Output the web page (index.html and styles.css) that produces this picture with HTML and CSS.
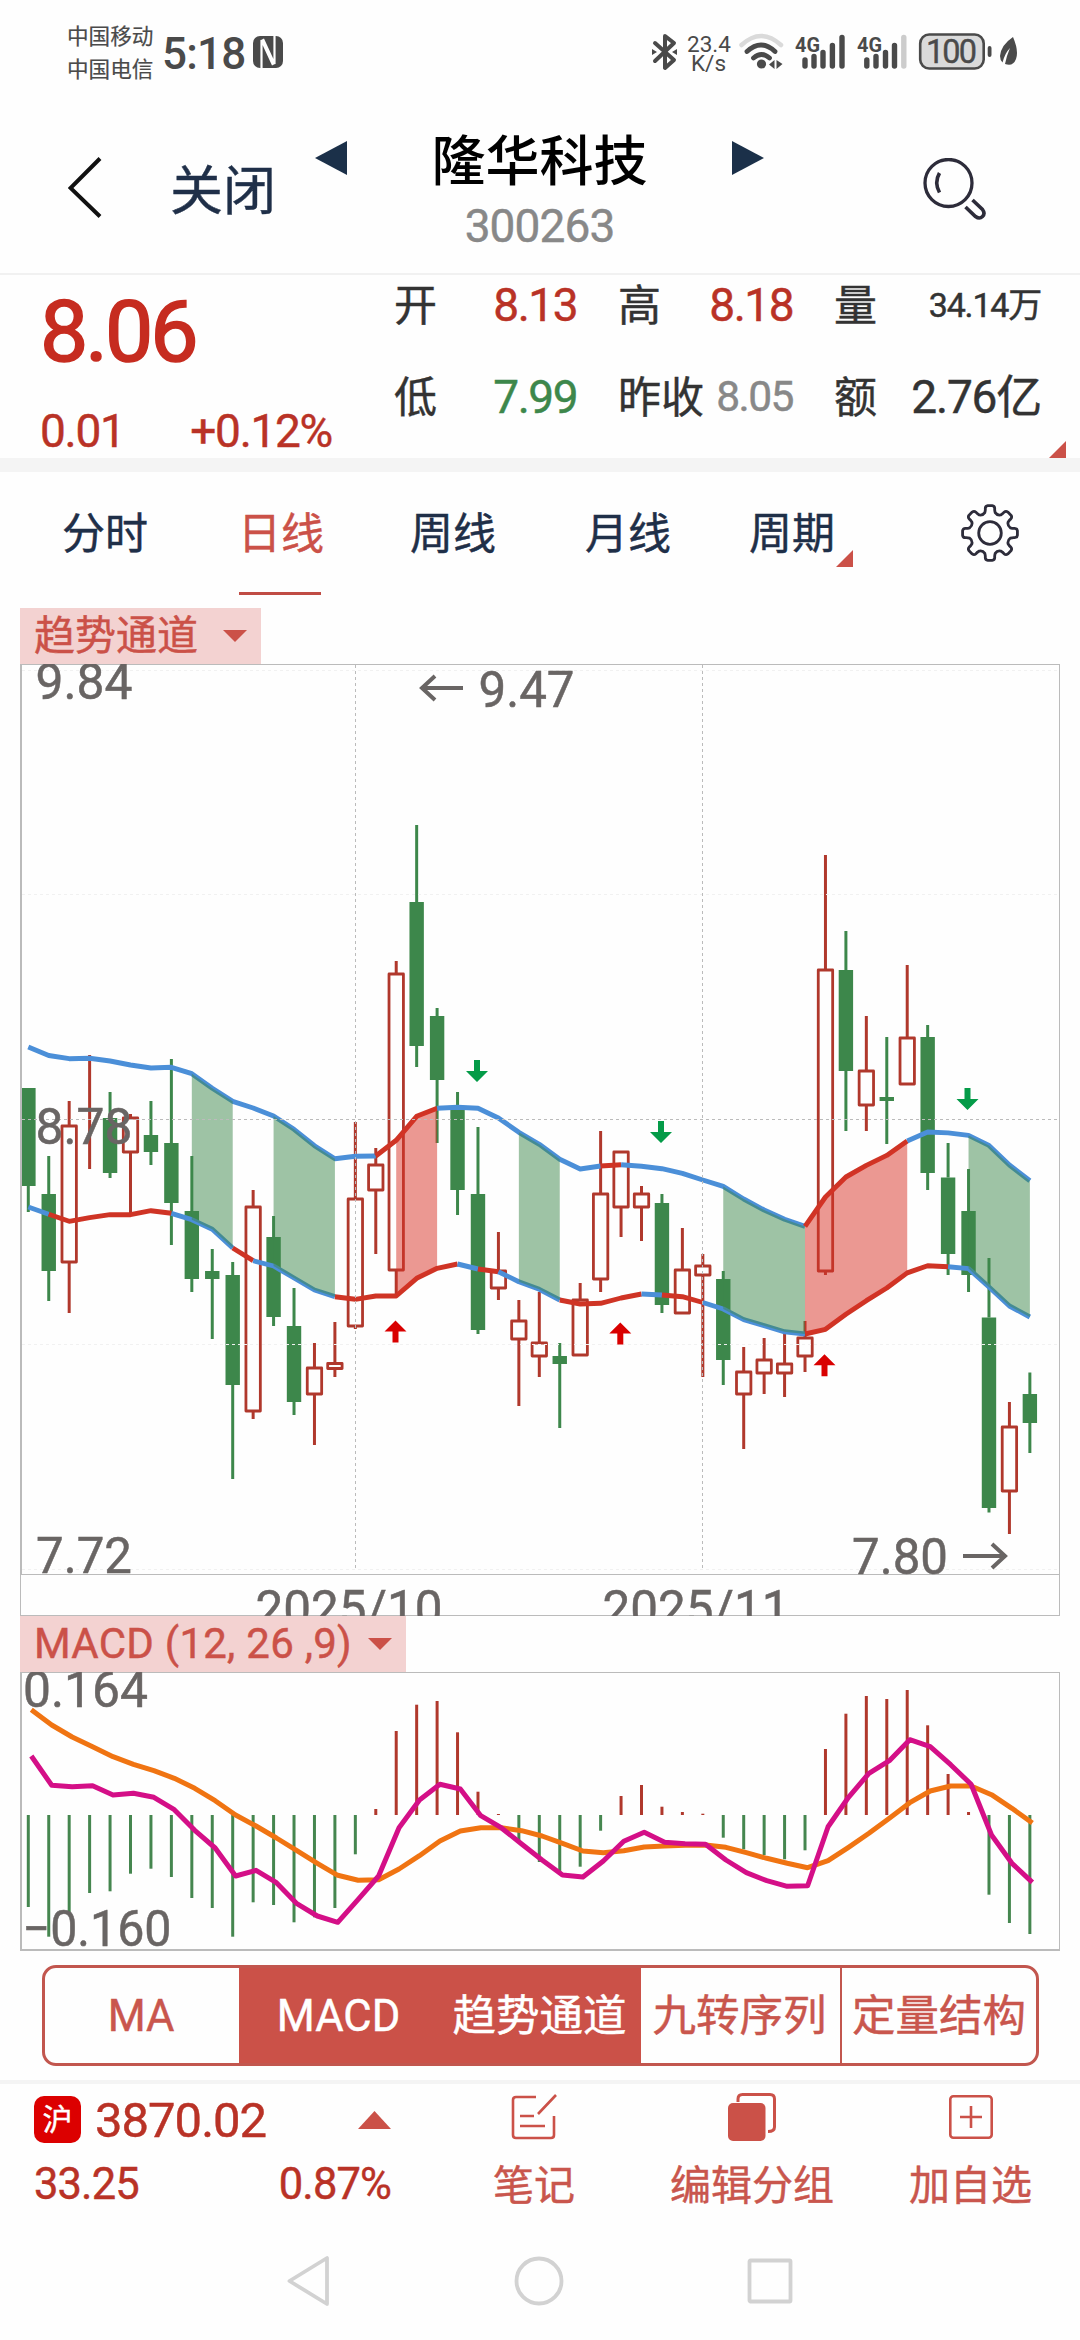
FILE: index.html
```html
<!DOCTYPE html>
<html lang="zh-CN">
<head>
<meta charset="utf-8">
<title>隆华科技 300263</title>
<link rel="stylesheet" href="styles.css">
</head>
<body>
<div class="status">
  <div class="carriers"><span>中国移动</span><span>中国电信</span></div>
  <span class="clock">5:18</span>
  <svg class="nfc" width="30" height="34" viewBox="0 0 30 34"><rect x="0" y="1" width="30" height="32" rx="7" fill="#4a4a4a"/><path d="M8.500 34V5L20 30M21.500 0v29L10 4" fill="none" stroke="#fefefe" stroke-width="2.200"/></svg>
  <div class="status-right">
    <svg width="400" height="44" viewBox="650 30 400 44" fill="none">
      <path d="M655 43l19 17-9 8V36l9 7-19 18" stroke="#4a4a4a" stroke-width="4" stroke-linejoin="round" stroke-linecap="round"/>
      <path d="M652 49l5 3-5 3zM677 49l-5 3 5 3z" fill="#4a4a4a"/>
      <g fill="#4a4a4a" class="net">
        <text x="687" y="51.500" font-size="22.500">23.4</text><text x="691" y="70.500" font-size="22.500">K/s</text>
        <text x="795" y="51.500" font-size="21" font-weight="700" textLength="25" lengthAdjust="spacingAndGlyphs">4G</text>
        <text x="857" y="51.500" font-size="21" font-weight="700" textLength="25" lengthAdjust="spacingAndGlyphs">4G</text>
      </g>
      <path d="M741.500 45q19.500-18 39.500 0" stroke="#dadada" stroke-width="4.500" stroke-linecap="round"/>
      <path d="M747 51.500q14-13 28 0M753.500 58q8-7 16 0" stroke="#4a4a4a" stroke-width="4.800" stroke-linecap="round"/>
      <circle cx="761.500" cy="64" r="4.600" fill="#4a4a4a"/>
      <path d="M774.500 60v9l-5.500-4.500zM776.500 60v9l6-5z" fill="#4a4a4a"/>
      <g stroke="#4a4a4a" stroke-width="5.400" stroke-linecap="round">
        <path d="M805 60v6M814 56.500V66M823 52.500V66M832.400 45.500V66M842 37.500V66"/>
        <path d="M866.800 60v6M876 56.500V66M885.500 52.500V66M894.500 45.500V66"/>
        <path d="M903.800 37.500V66" stroke="#ccc"/>
      </g>
      <rect x="920.200" y="34.500" width="63.500" height="34" rx="9" fill="#dadada" stroke="#4a4a4a" stroke-width="2.600"/>
      <text x="926" y="63" font-size="32.500" fill="#4a4a4a" stroke="#4a4a4a" stroke-width=".4" textLength="51" class="net">100</text>
      <path d="M989.600 48v7" stroke="#4a4a4a" stroke-width="3.800" stroke-linecap="round"/>
      <path d="M1013 37Q1001 45 1000 56q0 4 2.500 6.500Q1005 53 1010 48q-3.500 8-5 16 8 3 11-5 3-8-3-22z" fill="#4a4a4a"/>
    </svg>
  </div>
</div>

<header class="header">
  <svg class="back" width="34" height="62" viewBox="0 0 34 62"><path d="M32 1.500L2.500 31 32 59.500" fill="none" stroke="#111" stroke-width="4"/></svg>
  <span class="close">关闭</span>
  <svg class="step" width="32" height="34"><path d="M32 0v34L0 17z" fill="#1b3049"/></svg>
  <div class="title"><span class="name">隆华科技</span><span class="code">300263</span></div>
  <svg class="step" width="32" height="34"><path d="M0 0v34l32-17z" fill="#1b3049"/></svg>
  <svg class="search" width="64" height="64" viewBox="0 0 64 64" fill="none" stroke="#2d2c3a" stroke-width="3.300"><circle cx="25.500" cy="25" r="23.500"/><path d="M16.500 15q-5.500 9.500 0 19.500" stroke-width="3.600"/><path d="M42.500 49l10 9.500q4 3 7 0t0-7L49.500 42" stroke-width="3.600"/></svg>
</header>

<section class="quote">
  <div class="last"><div class="price">8.06</div><div class="change"><span>0.01</span><span>+0.12%</span></div></div>
  <div class="stats">
    <div class="stat"><span>开</span><b class="up">8.13</b></div>
    <div class="stat"><span>高</span><b class="up">8.18</b></div>
    <div class="stat"><span>量</span><b class="vol">34.14万</b></div>
    <div class="stat"><span>低</span><b class="down">7.99</b></div>
    <div class="stat"><span>昨收</span><b class="prev">8.05</b></div>
    <div class="stat"><span>额</span><b class="amt">2.76亿</b></div>
  </div>
  <i class="corner"></i>
</section>

<nav class="tabs">
  <span class="tab">分时</span><span class="tab active">日线</span><span class="tab">周线</span><span class="tab">月线</span><span class="tab more">周期</span>
  <svg class="gear" id="gear" width="60" height="60" viewBox="-30 -30 60 60" fill="none" stroke="#2d2c3a" stroke-width="2.800" stroke-linejoin="round"><circle r="11.300"/></svg>
</nav>

<div class="tag"><span>趋势通道</span><svg width="24" height="12"><path d="M0 0h24L12 12z" fill="#cb5148"/></svg></div>
<svg id="kline" class="plot" width="1080" height="952" viewBox="0 664 1080 952"></svg>
<div class="tag macd"><span>MACD (12, 26 ,9)</span><svg width="24" height="12"><path d="M0 0h24L12 12z" fill="#cb5148"/></svg></div>
<svg id="macd" class="plot" width="1080" height="280" viewBox="0 1672 1080 280"></svg>

<div class="segments">
  <span>MA</span><span class="on">MACD</span><span class="on">趋势通道</span><span>九转序列</span><span class="split">定量结构</span>
</div>

<footer class="footer">
  <div class="index">
    <div class="index-row"><span class="badge">沪</span><span class="points">3870.02</span><svg width="33" height="18"><path d="M0 18h33L16.500 0z" fill="#cb5148"/></svg></div>
    <div class="index-row small"><span>33.25</span><span>0.87%</span></div>
  </div>
  <div class="action note"><svg width="48" height="48" viewBox="0 0 48 48" fill="none" stroke="#cb5148" stroke-width="2.600"><path d="M26 4H6Q3 4 3 7v35q0 3 3 3h35q3 0 3-3V23M46 2L28 21M10 23h14M10 33h25"/></svg><span>笔记</span></div>
  <div class="action group"><svg width="48" height="48" viewBox="0 0 48 48"><path d="M10 9V6q0-4.500 4.500-4.500H42q4.500 0 4.500 4.500v28q0 4.500-6.500 4.500" fill="none" stroke="#cb5148" stroke-width="3"/><rect y="10" width="37.500" height="38" rx="5" fill="#cb5148"/></svg><span>编辑分组</span></div>
  <div class="action add"><svg width="48" height="48" viewBox="0 0 48 48" fill="none" stroke="#cb5148" stroke-width="2.600"><rect x="3.300" y="3.300" width="41.400" height="41.400" rx="3"/><path d="M13 24h22M24 13v22"/></svg><span>加自选</span></div>
</footer>

<div class="sysnav">
  <svg width="46" height="52" viewBox="0 0 46 52"><path d="M42 3v46L4.500 26z" fill="none" stroke="#d2d2d2" stroke-width="3.800" stroke-linejoin="round"/></svg>
  <svg width="50" height="50" viewBox="0 0 50 50"><circle cx="25" cy="25" r="22.500" fill="none" stroke="#d2d2d2" stroke-width="3.800"/></svg>
  <svg width="46" height="46" viewBox="0 0 46 46"><rect x="2.500" y="2.500" width="41" height="41" rx="1" fill="none" stroke="#d2d2d2" stroke-width="3.800"/></svg>
</div>
<script src="chart.js"></script>
</body>
</html>
```
FILE: styles.css
```css
* { box-sizing: border-box; }
body {
  margin: 0; width: 1080px; height: 2340px; overflow: hidden;
  background: #fefefe; color: #333;
  font-family: Roboto, "Noto Sans CJK SC", sans-serif;
  -webkit-text-stroke: .45px currentColor;
  display: flex; flex-direction: column;
}
svg { display: block; flex: none; -webkit-text-stroke: 0; }
span, b, div { white-space: nowrap; }
b { font-weight: 400; }

.status { height: 104px; padding: 0 30px 0 67px; display: flex; align-items: center; color: #4a4a4a; -webkit-text-stroke: .2px currentColor; }
.carriers { width: 95px; display: flex; flex-direction: column; font-size: 21.6px; line-height: 33px; padding-top: 1px; }
.clock { width: 91px; font-size: 44px; font-weight: 500; line-height: 60px; letter-spacing: -.8px; padding-top: 4px; -webkit-text-stroke: 0; }
.status-right { margin-left: auto; }
.net { font-family: Roboto, sans-serif; }

.header { height: 171px; border-bottom: 2px solid #f1f1f1; padding-left: 68px; display: flex; align-items: flex-start; }
.back { margin-top: 53px; }
.close { width: 145px; margin: 56px 0 0 68px; font-size: 53px; line-height: 64px; color: #1f2f48; }
.step { margin-top: 37px; }
.title { width: 385px; display: flex; flex-direction: column; align-items: center; padding-top: 27px; }
.name { font-size: 54px; line-height: 64px; color: #000; font-weight: 500; -webkit-text-stroke: 0; }
.code { font-size: 46px; line-height: 60px; color: #888; letter-spacing: -.9px; margin-top: 1px; }
.search { margin: 54px 0 0 159px; }

.quote { position: relative; height: 197px; border-bottom: 14px solid #f4f4f4; display: flex; }
.last { width: 394px; padding: 5px 0 0 40px; color: #c02b20; }
.price { font-size: 86px; line-height: 104px; letter-spacing: -3px; color: #c62c20; -webkit-text-stroke: 1.6px currentColor; }
.change { display: flex; justify-content: space-between; width: 292px; margin-top: 19px; font-size: 46px; line-height: 56px; letter-spacing: -1.3px; color: #b93226; }
.stats { display: grid; grid-template-columns: 183px 175px 207px; grid-template-rows: 60px 60px; gap: 32px 41px; }
.stat { display: flex; justify-content: space-between; font-size: 43px; line-height: 62px; }
.stat b { font-size: 46px; letter-spacing: -1.5px; line-height: 60px; }
.up { color: #b93226; }
.down { color: #3d874b; }
.stat .vol { font-size: 34px; letter-spacing: -1.2px; }
.stat .prev { font-size: 42.5px; color: #888; }
.stat .amt { font-size: 46px; letter-spacing: -1.2px; }
.corner { position: absolute; left: 1049px; top: 166px; border-left: 17px solid transparent; border-bottom: 17px solid #cb5148; }

.tabs { height: 136px; padding: 31px 0 0 62px; display: grid; grid-template-columns: 177px 171px 175px 164px 211px 60px; }
.tab { position: relative; justify-self: start; height: 92px; font-size: 43px; line-height: 63px; color: #1f2f48; }
.active { color: #cb5148; border-bottom: 3px solid #c04c44; width: 82px; text-indent: -1px; }
.more::after { content: ""; position: absolute; left: 87px; top: 47px; border-left: 17px solid transparent; border-bottom: 17px solid #cb5148; }

.tag { width: 241px; height: 56px; margin-left: 20px; padding: 0 14px 0 14px; background: #f3d2d1; color: #cb5148; display: flex; align-items: center; justify-content: space-between; font-size: 41px; line-height: 58px; flex: none; }
.tag svg { margin-top: -1px; }
.macd { width: 386px; }
.macd span { font-size: 42px; letter-spacing: .25px; }
.plot { flex: none; overflow: hidden; font-family: Roboto, sans-serif; font-size: 50.5px; }

.segments { height: 101px; margin: 13px 41px 14px 42px; border: 3px solid #c2564e; border-radius: 14px; overflow: hidden; flex: none; display: grid; grid-template-columns: 194px 201px 201px 199px 1fr; font-size: 43.5px; line-height: 98px; text-align: center; color: #c9564d; }
.segments span { text-indent: -2px; }
.segments .on { background: #cb5148; color: #fff; }
.segments .split { border-left: 2px solid #c2564e; text-indent: 0; }

.footer { height: 140px; border-top: 4px solid #f4f4f4; display: flex; align-items: flex-start; flex: none; color: #b93226; }
.index { width: 391px; padding: 12px 0 0 34px; }
.index-row { height: 47px; display: flex; align-items: center; }
.index-row svg { margin-left: auto; }
.badge { width: 47px; height: 47px; border-radius: 10px; background: #dc0000; color: #fff; font-size: 30px; line-height: 48px; text-align: center; }
.points { font-size: 49px; letter-spacing: -1px; margin: 2px 0 0 14px; }
.small { justify-content: space-between; font-size: 43.5px; letter-spacing: -.9px; margin-top: 18px; }
.action { display: flex; flex-direction: column; align-items: center; font-size: 41px; line-height: 56px; color: #c9564d; padding-top: 9px; }
.action span { margin-top: 17px; }
.note { margin-left: 102px; }
.group { margin-left: 95px; }
.add { margin-left: 75px; }

.sysnav { padding: 35px 287px 0 285px; display: flex; justify-content: space-between; align-items: center; }
```
FILE: chart.js
```js
const NS = 'http://www.w3.org/2000/svg';
const RED = '#b0382c', GREEN = '#3d874b', BLUE = '#4b8fd8', LINE_RED = '#cf3425', FRAME = '#bbb', LABEL = '#696564';
const STEP = 20.44;
const X = i => 28.3 + i * STEP;

function add(svg, name, attrs, text) {
  const el = document.createElementNS(NS, name);
  for (const k in attrs) el.setAttribute(k, attrs[k]);
  if (text) el.textContent = text;
  svg.appendChild(el);
}
function line(svg, x1, y1, x2, y2, stroke, width, dash) {
  add(svg, 'line', { x1, y1, x2, y2, stroke, 'stroke-width': width, 'stroke-dasharray': dash || 'none' });
}
function label(svg, x, y, text, textLength) {
  add(svg, 'text', { x, y, fill: LABEL, stroke: LABEL, 'stroke-width': .5, textLength, lengthAdjust: 'spacingAndGlyphs' }, text);
}

/* direction, body top, body bottom, high, low */
const candles = [
  ['g',1088,1186,1088,1212],['g',1194,1271,1156,1301],['r',1126,1262,1101,1313],['r',1118,1118,1055,1169],['g',1118,1173,1092,1178],
  ['r',1118,1152,1114,1213],['g',1135,1152,1101,1165],['g',1143,1203,1059,1245],['g',1211,1279,1156,1292],['g',1271,1279,1249,1339],
  ['g',1275,1385,1262,1479],['r',1207,1411,1190,1419],['g',1237,1317,1216,1326],['g',1326,1402,1288,1415],['r',1368,1394,1343,1445],
  ['r',1363.5,1368.5,1322,1377],['r',1199,1326,1122,1329],['r',1165,1190,1148,1254],['r',974,1270,961,1295],['g',902,1046,825,1067],
  ['g',1016,1080,1008,1143],['g',1107,1190,1092,1215],['g',1194,1330,1127,1334],['r',1271,1288,1232,1300],['r',1321,1339,1300,1406],
  ['r',1343,1356,1292,1377],['g',1356,1364,1343,1428],['r',1300,1355,1283,1355],['r',1194,1279,1131,1292],['r',1152,1207,1152,1237],
  ['r',1194,1207,1186,1241],['g',1203,1305,1194,1313],['r',1270,1313,1228,1313],['r',1266,1275,1254,1377],['g',1279,1360,1271,1385],
  ['r',1372,1394,1347,1449],['r',1360,1373,1338,1394],['r',1364,1373,1334,1397],['r',1338,1356,1321,1372],['r',970,1271,855,1275],
  ['g',970,1071,931,1131],['r',1071,1105,1016,1131],['g',1097,1101,1037,1144],['r',1038,1084,965,1084],['g',1037,1173,1025,1190],
  ['g',1177.5,1254,1143,1275],['g',1211,1275,1169,1292],['g',1317.5,1508,1258,1512.5],['r',1427,1491,1402,1534],['g',1394,1423,1372.5,1453]
];
const upper = [1047,1055.5,1058.7,1058.3,1061,1065,1068,1067.3,1073.7,1088.3,1101.3,1108,1116,1129.3,1145.7,1158.7,1156.3,1156,1140.3,1116.3,1108.3,1107.3,1108.3,1118,1132.3,1144.3,1159.3,1169,1166,1164.7,1166.3,1168.7,1173.3,1180,1186.4,1199,1210,1219.3,1226.4,1197,1177,1165.4,1155.4,1141,1132,1132.9,1135.4,1145.4,1165,1180.7];
const lower = [1207,1214.3,1221.3,1217.7,1214.7,1214.7,1210.7,1213.3,1219.7,1229.3,1248,1260.7,1266,1278,1290,1296.7,1299.3,1296,1296,1278.3,1268.3,1264,1269,1271.7,1281.7,1289.3,1300,1304,1303.3,1298,1294,1295,1296.7,1302.5,1309,1319.6,1325.7,1331.8,1334,1329.3,1314.3,1300.7,1288,1272.9,1265.7,1266.8,1268.6,1287,1306,1317];

const k = document.getElementById('kline');
candles.forEach(([dir, top, bottom, high, low], i) => {
  const x = X(i), color = dir === 'r' ? RED : GREEN;
  line(k, x, high, x, top, color, 3);
  line(k, x, bottom, x, low, color, 3);
  if (dir === 'g') add(k, 'rect', { x: Math.max(x - 7.2, 22), y: top, width: i ? 14.4 : 13.6, height: bottom - top, fill: color });
  else add(k, 'rect', { x: x - 7.2, y: top, width: 14.4, height: bottom - top, fill: 'none', stroke: color, 'stroke-width': 2.8, 'stroke-linejoin': 'round' });
});

function path(data, from, to) {
  return data.slice(from, to + 1).map((y, n) => (n ? 'L' : 'M') + X(from + n) + ' ' + y).join('');
}
function band(data, ranges) {
  ranges.forEach(([from, to, color]) => add(k, 'path', { d: path(data, from, to), fill: 'none', stroke: color, 'stroke-width': 4.9, 'stroke-linejoin': 'round' }));
}
band(upper, [[0,17,BLUE],[17,20,LINE_RED],[20,28,BLUE],[28,29,LINE_RED],[29,38,BLUE],[38,43,LINE_RED],[43,49,BLUE]]);
band(lower, [[0,1,BLUE],[1,7,LINE_RED],[7,10,BLUE],[10,11,LINE_RED],[11,15,BLUE],[15,21,LINE_RED],[21,22,BLUE],[22,23,LINE_RED],[23,26,BLUE],[26,30,LINE_RED],[30,31,BLUE],[31,33,LINE_RED],[33,38,BLUE],[38,45,LINE_RED],[45,49,BLUE]]);

[[8,10,GREEN],[12,15,GREEN],[18,20,'#d83125'],[24,26,GREEN],[34,38,GREEN],[38,43,'#d83125'],[46,49,GREEN]].forEach(([from, to, fill]) => {
  let d = path(upper, from, to);
  for (let i = to; i >= from; i--) d += 'L' + X(i) + ' ' + lower[i];
  add(k, 'path', { d: d + 'Z', fill, opacity: .5 });
});

[670.5, 894.5, 1344.5, 1569.5].forEach(y => line(k, 22, y, 1059, y, '#f1f1f1', 1, '3 3'));
line(k, 22, 1119.5, 1059, 1119.5, FRAME, 1, '3 3');
[355.5, 702.5].forEach(x => line(k, x, 665, x, 1571, FRAME, 1, '3 3'));

[[477,1060],[661,1121],[967.5,1088]].forEach(([x, y]) => add(k, 'path', { d: `M${x-3} ${y}h6v11h8l-11 11-11-11h8z`, fill: '#049b48' }));
[[395.5,1320.5],[620.3,1322.5],[824.5,1354.3]].forEach(([x, y]) => add(k, 'path', { d: `M${x} ${y}l11 11h-8v11h-6v-11h-8z`, fill: '#d90000' }));

line(k, 21, 664, 21, 1574, FRAME, 2);
line(k, 20.5, 1574, 20.5, 1616, FRAME, 1);
line(k, 1059.5, 664, 1059.5, 1616, FRAME, 1);
[664.5, 1574.5, 1615.5].forEach(y => line(k, 20, y, 1060, y, FRAME, 1));

label(k, 35.5, 699, '9.84', 97);
label(k, 35.5, 1144, '8.78', 97);
label(k, 36, 1572.5, '7.72', 96);
label(k, 478.5, 706.5, '9.47', 96);
label(k, 852, 1574, '7.80', 96);
label(k, 255.5, 1626, '2025/10', 187);
label(k, 602.5, 1626, '2025/11', 187);
add(k, 'path', { d: 'M463 688H422M435 676L422 688l13 12M963 1556h41M992 1544l13 12-13 12', fill: 'none', stroke: LABEL, 'stroke-width': 4 });

const bars = [1907,1936.7,1912.7,1893,1891.3,1873.7,1868.7,1877,1898,1908,1936.7,1902.3,1905,1922.3,1917.3,1908,1854.3,1809,1731,1704.7,1701,1732.3,1791.7,1814,1840,1862,1873,1866.7,1830.7,1796,1785,1806.7,1812,1813.7,1837.7,1849.3,1855,1859.3,1850.3,1749,1713.7,1696,1699,1690,1725.3,1774,1812,1894.7,1923,1934];
const dea = [1709.7,1725,1737,1746.7,1756.7,1764.3,1770.7,1778.3,1788.3,1800.7,1815,1826,1838,1850.7,1863.3,1875.3,1880.3,1879.7,1869,1855.7,1841,1831,1827.7,1827.7,1830.7,1836,1843.3,1851,1852.7,1850.7,1847,1846,1845.3,1845,1847.3,1852.7,1858.3,1863.3,1867.7,1860.7,1847.3,1833.3,1818.3,1802.7,1791,1786,1786,1794.7,1808.3,1823];
const dif = [1756,1785.3,1786.7,1785.7,1795,1793.3,1797.3,1809.7,1830.3,1848,1876,1870.3,1882.7,1903.7,1916,1922.3,1899.3,1876,1827.7,1800,1784.3,1789,1815.7,1827.7,1844,1860,1875,1877,1861,1841.3,1832.3,1842.3,1843.7,1844.3,1860,1872.7,1880.7,1886.3,1885.7,1826.7,1797.3,1773.3,1760.7,1739.7,1746.7,1764.7,1784.3,1835,1863.3,1882.3];
const m = document.getElementById('macd');
bars.forEach((y, i) => line(m, X(i), 1815, X(i), y, y < 1815 ? RED : '#45864f', 3));
[[dea, '#f07412'], [dif, '#d40f87']].forEach(([data, stroke]) =>
  add(m, 'polyline', { points: data.map((y, i) => (31.3 + i * 20.43) + ',' + y).join(' '), fill: 'none', stroke, 'stroke-width': 5, 'stroke-linejoin': 'round' }));
line(m, 21, 1672, 21, 1951, FRAME, 2);
line(m, 1059.5, 1672, 1059.5, 1951, FRAME, 1);
line(m, 20, 1672.5, 1060, 1672.5, FRAME, 1);
line(m, 20, 1950, 1060, 1950, FRAME, 2);
label(m, 23, 1706.5, '0.164', 125);
label(m, 22.5, 1946, '−0.160', 149);

/* settings gear: eight rounded teeth */
const pt = (r, a) => (r * Math.cos(a)).toFixed(2) + ' ' + (r * Math.sin(a)).toFixed(2);
let gear = '';
for (let t = 0; t < 8; t++) {
  const a = t * Math.PI / 4;
  gear += (t ? 'L' : 'M') + pt(21, a - .25) + 'Q' + pt(23.5, a - .19) + ' ' + pt(25, a - .19) + 'Q' + pt(27.5, a - .17) + ' ' + pt(27.5, a - .08)
    + 'L' + pt(27.5, a + .08) + 'Q' + pt(27.5, a + .17) + ' ' + pt(25, a + .19) + 'Q' + pt(23.5, a + .19) + ' ' + pt(21, a + .25)
    + 'Q' + pt(18.8, a + Math.PI / 8) + ' ' + pt(21, a + Math.PI / 4 - .25);
}
add(document.getElementById('gear'), 'path', { d: gear + 'Z' });
```
